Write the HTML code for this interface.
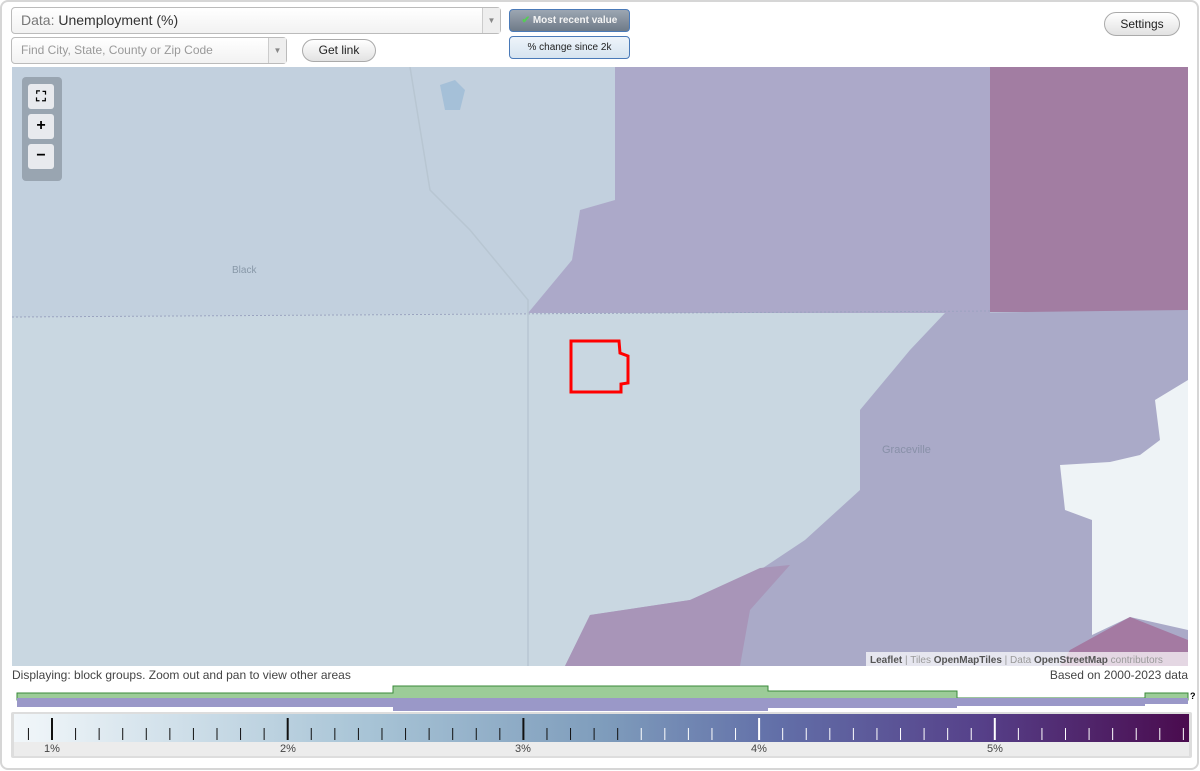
<!DOCTYPE html>
<html><head><meta charset="utf-8"><style>
*{box-sizing:border-box}
body{margin:0;width:1200px;height:771px;background:#fff;font-family:"Liberation Sans",sans-serif;position:relative;overflow:hidden}
.frame{position:absolute;left:0;top:0;width:1199px;height:770px;border:2px solid #d6d6d6;border-radius:8px}
.sel{position:absolute;border:1px solid #bbb;border-radius:4px;background:linear-gradient(#fff,#f2f2f2)}
.arr{position:absolute;right:0;top:0;bottom:0;width:18px;border-left:1px solid #ccc;background:#eee;color:#888;font-size:8px;text-align:center}
.btn{position:absolute;border:1px solid #aaa;border-radius:12px;background:linear-gradient(#fff,#e2e2e2);font-size:12px;text-align:center;color:#222}
.tab{position:absolute;border:1px solid #4a7ab8;border-radius:4px;font-size:10px;text-align:center}
.ctl{position:absolute;left:22px;top:77px;width:40px;height:104px;background:rgba(120,130,140,.55);border-radius:4px}
.cb{position:absolute;left:6px;width:26px;height:25px;background:#e8eaee;border-radius:3px;text-align:center;font-weight:bold;font-size:16px;line-height:24px}
</style></head><body>
<div class="frame"></div>
<div class="sel" style="left:11px;top:7px;width:490px;height:27px;font-size:14px;line-height:25px;padding-left:9px;color:#333"><span style="color:#777">Data:</span> Unemployment (%)<div class="arr" style="line-height:25px">▼</div></div>
<div class="sel" style="left:11px;top:37px;width:276px;height:27px;font-size:12px;line-height:25px;padding-left:9px;color:#999">Find City, State, County or Zip Code<div class="arr" style="line-height:25px">▼</div></div>
<div class="btn" style="left:302px;top:39px;width:74px;height:23px;line-height:21px">Get link</div>
<div class="tab" style="left:509px;top:9px;width:121px;height:23px;line-height:21px;background:linear-gradient(#9ca6b2,#6f7b88);color:#f4f4f4;font-weight:bold"><span style="color:#5c5">✔</span> Most recent value</div>
<div class="tab" style="left:509px;top:36px;width:121px;height:23px;line-height:21px;background:linear-gradient(#eef4fa,#d6e4f0);color:#222">% change since 2k</div>
<div class="btn" style="left:1104px;top:12px;width:76px;height:24px;line-height:22px">Settings</div>

<svg style="position:absolute;left:0;top:0" width="1200" height="771">
<defs><clipPath id="c"><rect x="12" y="67" width="1176" height="599"/></clipPath></defs>
<g clip-path="url(#c)">
<rect x="12" y="67" width="1176" height="599" fill="#c9d7e1"/>
<polygon points="12,67 615,67 615,200 580,210 572,260 528,313 12,317" fill="#c2d0de"/>
<polygon points="615,67 993,67 990,313 528,313 572,260 580,210 615,200" fill="#aca9c9"/>
<rect x="990" y="67" width="198" height="245" fill="#a27da2"/>
<polygon points="945,313 1188,310 1188,666 565,666 590,615 690,600 760,570 805,540 860,490 860,410 910,350" fill="#aaaac8"/>
<polygon points="1060,465 1110,462 1140,455 1160,440 1155,400 1188,380 1188,630 1130,617 1092,635 1092,520 1065,510" fill="#eef3f6"/>
<polygon points="1070,650 1130,617 1188,640 1188,666 1060,666" fill="#a47aa2"/>
<polygon points="565,666 590,615 690,600 760,568 790,565 750,610 740,666" fill="#a895b8"/>
<path d="M12,317 L990,311" stroke="#9aa3c0" stroke-dasharray="2,2" fill="none"/>
<path d="M410,67 L430,190 L470,230 L528,300 L528,666" stroke="#b8c6d2" fill="none" stroke-width="1.5"/>
<path d="M440,85 l15,-5 l10,10 l-5,20 l-15,0z" fill="#a5c0d8"/>
<path d="M571,341 L619,341 L620,353 L628,356 L628,383 L621,384 L621,392 L571,392Z" stroke="#f00" stroke-width="3" fill="none"/>
<text x="232" y="273" font-size="10" fill="#8898a8">Black</text>
<text x="882" y="453" font-size="11" fill="#8890a8">Graceville</text>
</g>
<rect x="866" y="652" width="322" height="14" fill="rgba(255,255,255,.7)"/>
<text x="870" y="663" font-size="10" fill="#999"><tspan fill="#555" font-weight="bold">Leaflet</tspan> | Tiles <tspan fill="#555" font-weight="bold">OpenMapTiles</tspan> | Data <tspan fill="#555" font-weight="bold">OpenStreetMap</tspan> contributors</text>
<text x="12" y="679" font-size="12" fill="#444">Displaying: block groups. Zoom out and pan to view other areas</text>
<text x="1188" y="679" font-size="12" fill="#444" text-anchor="end">Based on 2000-2023 data</text>
<path d="M17,693 L393,693 L393,686 L768,686 L768,691 L957,691 L957,698 L1145,698 L1145,693 L1188,693 L1188,700 L17,700Z" fill="#9ccc98" stroke="#3a8a3a"/>
<path d="M17,698 L1188,698 L1188,704 L1145,704 L1145,706 L957,706 L957,708 L768,708 L768,711 L393,711 L393,707 L17,707Z" fill="#9a98c8"/>
<text x="1190" y="699" font-size="9" font-weight="bold">?</text>
<defs><linearGradient id="g"><stop offset="0" stop-color="#f2f7fa"/><stop offset=".3" stop-color="#a8c4d6"/><stop offset=".5" stop-color="#7f9dbc"/><stop offset=".65" stop-color="#626fa8"/><stop offset=".82" stop-color="#56418a"/><stop offset="1" stop-color="#4a0b4e"/></linearGradient></defs>
<rect x="11" y="712" width="1181" height="46" fill="#ddd" rx="2"/>
<rect x="14" y="714" width="1175" height="28" fill="url(#g)"/>
<rect x="14" y="742" width="1175" height="14" fill="#ececec"/>
<g id="t"></g>
<text font-size="11" fill="#444" text-anchor="middle"><tspan x="52" y="752">1%</tspan><tspan x="288" y="752">2%</tspan><tspan x="523" y="752">3%</tspan><tspan x="759" y="752">4%</tspan><tspan x="995" y="752">5%</tspan></text>
</svg>
<script>
var g=document.getElementById('t'),s='';
for(var i=-1;i<50;i++){var x=52+i*23.57;if(x>1185)break;var maj=(i%10==0);var c=x<640?'#111':'#fff';
s+='<line x1="'+x+'" x2="'+x+'" y1="'+(maj?718:728)+'" y2="740" stroke="'+c+'" stroke-width="'+(maj?2:1)+'"/>';}
g.innerHTML=s;
</script>
<div class="ctl"><div class="cb" style="top:7px;font-size:14px">⛶</div><div class="cb" style="top:37px">+</div><div class="cb" style="top:67px">−</div></div>
</body></html>
